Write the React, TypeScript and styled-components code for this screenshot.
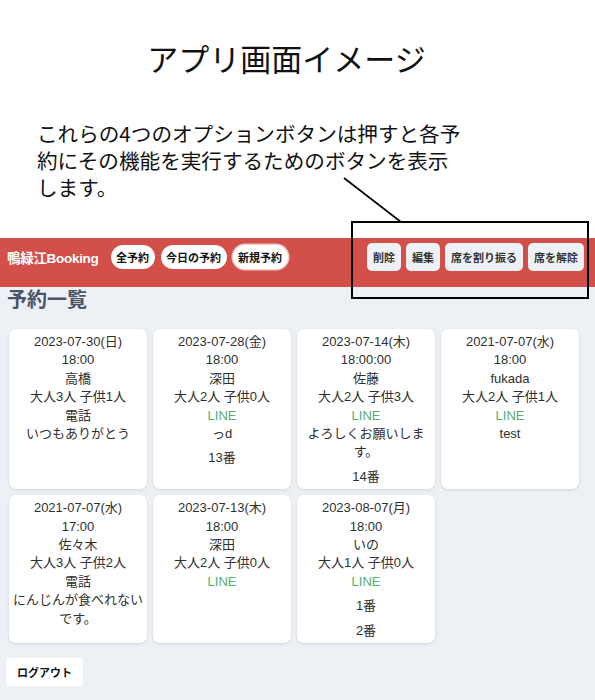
import React from "react";
import styled, { createGlobalStyle } from "styled-components";

const Global = createGlobalStyle`
  html, body { margin: 0; padding: 0; }
  body {
    background: #edf0f5;
    font-family: "Liberation Sans", "Noto Sans CJK JP", sans-serif;
    color: #2f2f2f;
  }
`;

const Page = styled.div`
  position: relative;
  min-height: 700px;
`;

const Intro = styled.section`
  height: 238px;
  background: #ffffff;
  box-sizing: border-box;
  padding-top: 38px;
  font-family: "Noto Sans CJK JP", sans-serif;
  color: #111;
`;

const Title = styled.h1`
  margin: 0;
  font-size: 31px;
  line-height: 40px;
  font-weight: 400;
  text-align: center;
  padding-right: 22px;
`;

const Note = styled.p`
  margin: 42px 0 0 0;
  padding-left: 37px;
  font-size: 20.6px;
  line-height: 27px;
  font-weight: 400;
`;

const Nav = styled.nav`
  display: flex;
  align-items: center;
  background: #d34f49;
  padding: 5px 11px 16px 7px;
  height: 28px;
  font-family: "Liberation Sans", "Noto Sans CJK JP", sans-serif;
`;

const Brand = styled.div`
  color: #ffffff;
  font-weight: 700;
  font-size: 13.5px;
  letter-spacing: -0.3px;
  margin-right: 12px;
`;

const Pills = styled.div`
  display: flex;
  gap: 6px;
`;

const Pill = styled.button<{ $active?: boolean }>`
  height: 24px;
  padding: 0 5.5px;
  border: none;
  border-radius: 12px;
  background: #ffffff;
  color: #111;
  font-family: "Noto Sans CJK JP", sans-serif;
  font-weight: 700;
  font-size: 11px;
  box-shadow: ${(p) => (p.$active ? "0 0 0 1.5px #f3c9c6" : "none")};
`;

const Options = styled.div`
  margin-left: auto;
  display: flex;
  gap: 5px;
`;

const OptionButton = styled.button`
  height: 28px;
  padding: 0 6px;
  border: none;
  border-radius: 5px;
  background: #eef1f5;
  color: #333;
  font-family: "Noto Sans CJK JP", sans-serif;
  font-weight: 700;
  font-size: 11px;
`;

const Main = styled.main`
  padding: 0 0 20px 0;
`;

const Heading = styled.h2`
  margin: 0;
  padding-left: 7px;
  font-size: 20px;
  line-height: 24px;
  font-weight: 700;
  color: #4a5568;
  font-family: "Noto Sans CJK JP", sans-serif;
`;

const Grid = styled.div`
  display: grid;
  grid-template-columns: repeat(4, 138px);
  column-gap: 6px;
  row-gap: 6px;
  padding-left: 9px;
  margin-top: 18px;
`;

const Card = styled.div`
  background: #ffffff;
  border-radius: 7px;
  box-shadow: 0 1px 3px rgba(0, 0, 0, 0.12);
  padding: 4px 2px 3px;
  text-align: center;
  font-size: 13px;
  line-height: 18.4px;
  color: #2f2f2f;
`;

const Line = styled.div<{ $tone?: "line" }>`
  color: ${(p) => (p.$tone === "line" ? "#55ad72" : "inherit")};
`;

const Seat = styled.div`
  margin-top: 6px;
`;

const Logout = styled.button`
  margin: 15px 0 0 6px;
  height: 28px;
  padding: 0 11px;
  border: none;
  border-radius: 4px;
  background: #ffffff;
  color: #111;
  font-family: "Noto Sans CJK JP", sans-serif;
  font-weight: 700;
  font-size: 11px;
`;

const Frame = styled.div`
  position: absolute;
  left: 351px;
  top: 221px;
  width: 238px;
  height: 78px;
  box-sizing: border-box;
  border: 2px solid #000;
  pointer-events: none;
`;

const Pointer = styled.svg`
  position: absolute;
  left: 340px;
  top: 174px;
  width: 70px;
  height: 52px;
  pointer-events: none;
`;

type Reservation = {
  date: string;
  time: string;
  name: string;
  people: string;
  via: string;
  note?: string;
  seats?: string[];
};

const reservations: Reservation[] = [
  { date: "2023-07-30(日)", time: "18:00", name: "高橋", people: "大人3人 子供1人", via: "電話", note: "いつもありがとう" },
  { date: "2023-07-28(金)", time: "18:00", name: "深田", people: "大人2人 子供0人", via: "LINE", note: "っd", seats: ["13番"] },
  { date: "2023-07-14(木)", time: "18:00:00", name: "佐藤", people: "大人2人 子供3人", via: "LINE", note: "よろしくお願いします。", seats: ["14番"] },
  { date: "2021-07-07(水)", time: "18:00", name: "fukada", people: "大人2人 子供1人", via: "LINE", note: "test" },
  { date: "2021-07-07(水)", time: "17:00", name: "佐々木", people: "大人3人 子供2人", via: "電話", note: "にんじんが食べれないです。" },
  { date: "2023-07-13(木)", time: "18:00", name: "深田", people: "大人2人 子供0人", via: "LINE" },
  { date: "2023-08-07(月)", time: "18:00", name: "いの", people: "大人1人 子供0人", via: "LINE", seats: ["1番", "2番"] },
];

export default function App() {
  return (
    <Page>
      <Global />
      <Intro>
        <Title>アプリ画面イメージ</Title>
        <Note>
          これらの4つのオプションボタンは押すと各予
          <br />
          約にその機能を実行するためのボタンを表示
          <br />
          します。
        </Note>
      </Intro>
      <Nav>
        <Brand>鴨緑江Booking</Brand>
        <Pills>
          <Pill>全予約</Pill>
          <Pill>今日の予約</Pill>
          <Pill $active>新規予約</Pill>
        </Pills>
        <Options>
          <OptionButton>削除</OptionButton>
          <OptionButton>編集</OptionButton>
          <OptionButton>席を割り振る</OptionButton>
          <OptionButton>席を解除</OptionButton>
        </Options>
      </Nav>
      <Main>
        <Heading>予約一覧</Heading>
        <Grid>
          {reservations.map((r, i) => (
            <Card key={i}>
              <Line>{r.date}</Line>
              <Line>{r.time}</Line>
              <Line>{r.name}</Line>
              <Line>{r.people}</Line>
              <Line $tone={r.via === "LINE" ? "line" : undefined}>{r.via}</Line>
              {r.note && <Line>{r.note}</Line>}
              {r.seats?.map((s) => (
                <Seat key={s}>{s}</Seat>
              ))}
            </Card>
          ))}
        </Grid>
        <Logout>ログアウト</Logout>
      </Main>
      <Frame />
      <Pointer viewBox="0 0 70 52">
        <line x1="4" y1="4" x2="61" y2="48" stroke="#000" strokeWidth="1.6" />
      </Pointer>
    </Page>
  );
}
